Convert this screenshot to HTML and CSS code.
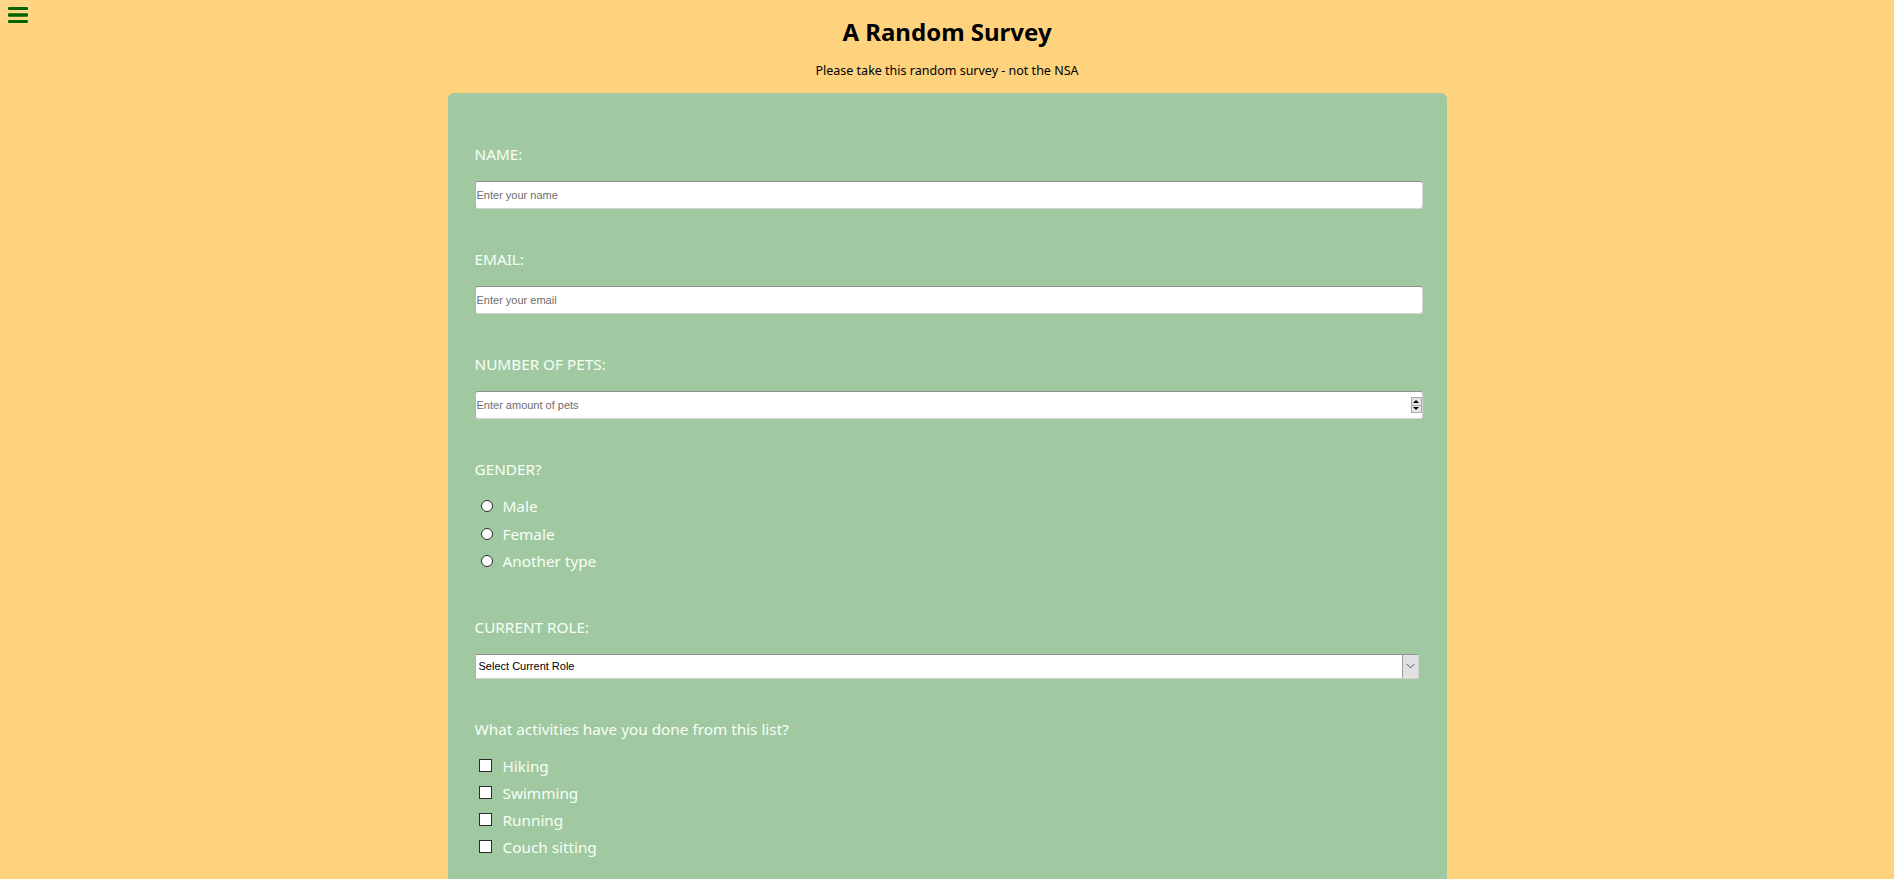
FILE: index.html
```html
<!DOCTYPE html>
<html lang="en">
<head>
<meta charset="utf-8">
<title>A Random Survey</title>
<link rel="stylesheet" href="styles.css">
</head>
<body>
<button class="menu-toggle" type="button" aria-label="Menu">
  <svg width="20" height="17" viewBox="0 0 20 17">
    <rect x="0" y="0" width="20" height="3" rx="1" fill="#006400"/>
    <rect x="0" y="6.3" width="20" height="3.4" rx="1" fill="#006400"/>
    <rect x="0" y="13" width="20" height="3" rx="1" fill="#006400"/>
  </svg>
</button>

<header class="header">
  <h1 class="title">A Random Survey</h1>
  <p class="subtitle">Please take this random survey - not the NSA</p>
</header>

<main class="card">
  <form class="survey">
    <div class="field">
      <label class="field-label" for="name">NAME:</label>
      <input class="text-input" id="name" type="text" placeholder="Enter your name">
    </div>

    <div class="field">
      <label class="field-label" for="email">EMAIL:</label>
      <input class="text-input" id="email" type="email" placeholder="Enter your email">
    </div>

    <div class="field">
      <label class="field-label" for="pets">NUMBER OF PETS:</label>
      <div class="number-wrap">
        <input class="text-input number-input" id="pets" type="number" placeholder="Enter amount of pets">
        <span class="spinner" aria-hidden="true">
          <span class="spin-btn"><span class="tri-up"></span></span>
          <span class="spin-btn"><span class="tri-down"></span></span>
        </span>
      </div>
    </div>

    <div class="field field-choices">
      <p class="field-label">GENDER?</p>
      <div class="choices">
        <label class="choice radio-choice"><input class="radio" type="radio" name="gender" value="male">Male</label>
        <label class="choice radio-choice"><input class="radio" type="radio" name="gender" value="female">Female</label>
        <label class="choice radio-choice"><input class="radio" type="radio" name="gender" value="other">Another type</label>
      </div>
    </div>

    <div class="field">
      <label class="field-label" for="role">CURRENT ROLE:</label>
      <div class="select-wrap">
        <select class="select" id="role">
          <option>Select Current Role</option>
          <option>Student</option>
          <option>Full Time Job</option>
          <option>Other</option>
        </select>
        <span class="select-arrow" aria-hidden="true">
          <svg width="9" height="6" viewBox="0 0 9 6"><path d="M0.5 0.8 L4.5 4.8 L8.5 0.8" fill="none" stroke="#555" stroke-width="1"/></svg>
        </span>
      </div>
    </div>

    <div class="field">
      <p class="field-label">What activities have you done from this list?</p>
      <div class="choices checks">
        <label class="choice check-choice"><input class="checkbox" type="checkbox" value="hiking">Hiking</label>
        <label class="choice check-choice"><input class="checkbox" type="checkbox" value="swimming">Swimming</label>
        <label class="choice check-choice"><input class="checkbox" type="checkbox" value="running">Running</label>
        <label class="choice check-choice"><input class="checkbox" type="checkbox" value="couch">Couch sitting</label>
      </div>
    </div>
  </form>
</main>
</body>
</html>
```

FILE: styles.css
```css
* {
  box-sizing: border-box;
}

html, body {
  margin: 0;
  padding: 0;
}

body {
  background: #ffd37d;
  font-family: "Noto Sans", "Open Sans", sans-serif;
  color: #000;
}

.menu-toggle {
  position: fixed;
  top: 0;
  left: 0;
  width: 33px;
  height: 25px;
  padding: 5px 0 0 8px;
  margin: 0;
  border: none;
  background: rgba(255, 255, 255, 0.07);
  display: block;
  line-height: 0;
  text-align: left;
  cursor: pointer;
}

.header {
  padding-top: 17px;
  text-align: center;
}

.title {
  margin: 0 0 15px;
  font-size: 24px;
  line-height: 30px;
  font-weight: 700;
}

.subtitle {
  margin: 0 0 13px;
  font-size: 12.5px;
  line-height: 18px;
}

.card {
  width: 999px;
  margin: 0 auto;
  background: #a0c9a1;
  border-radius: 6px;
  padding: 51px 24px 60px 27px;
}

.survey {
  display: flex;
  flex-direction: column;
}

.field {
  display: flex;
  flex-direction: column;
  margin-bottom: 40px;
}

.field-choices {
  margin-bottom: 45.5px;
}

.field-label {
  display: block;
  margin: 0 0 17px;
  font-size: 15.3px;
  line-height: 20px;
  color: #f8fff6;
}

.text-input {
  width: 100%;
  height: 28px;
  margin: 0;
  padding: 0 1px;
  border: 1px solid #d4d4d4;
  border-top-color: #8f8f8f;
  border-left-color: #b4b4b4;
  border-radius: 3px;
  background: #fff;
  font-family: "Liberation Sans", Arial, sans-serif;
  font-size: 11px;
  color: #000;
  outline: none;
}

.text-input::placeholder {
  color: #6d6d6d;
}

.number-input {
  -moz-appearance: textfield;
  appearance: textfield;
}

.number-input::-webkit-inner-spin-button,
.number-input::-webkit-outer-spin-button {
  -webkit-appearance: none;
  margin: 0;
}

.number-wrap {
  position: relative;
}

.spinner {
  position: absolute;
  right: 1px;
  top: 6px;
  width: 11px;
  height: 16px;
  display: flex;
  flex-direction: column;
  border: 1px solid #a8a8a8;
  background: #e6e6e6;
}

.spin-btn {
  flex: 1;
  display: flex;
  align-items: center;
  justify-content: center;
}

.spin-btn + .spin-btn {
  border-top: 1px solid #a8a8a8;
}

.tri-up {
  width: 0;
  height: 0;
  border-left: 3px solid transparent;
  border-right: 3px solid transparent;
  border-bottom: 3px solid #000;
}

.tri-down {
  width: 0;
  height: 0;
  border-left: 3px solid transparent;
  border-right: 3px solid transparent;
  border-top: 3px solid #000;
}

.choices {
  display: flex;
  flex-direction: column;
  gap: 7.5px;
}

.checks {
  gap: 7px;
}

.choice {
  display: flex;
  align-items: center;
  font-size: 15.3px;
  line-height: 20px;
  color: #f8fff6;
  cursor: pointer;
}

.radio-choice {
  padding-left: 6px;
}

.check-choice {
  padding-left: 4px;
}

.radio {
  -webkit-appearance: none;
  appearance: none;
  width: 12px;
  height: 12px;
  margin: 0 10px 0 0;
  border: 1px solid #2b2b2b;
  border-radius: 50%;
  background: #fff;
  flex: none;
}

.checkbox {
  -webkit-appearance: none;
  appearance: none;
  width: 13px;
  height: 13px;
  margin: 0 11px 0 0;
  border: 1px solid #2b2b2b;
  border-radius: 0;
  background: #fff;
  flex: none;
}

.select-wrap {
  position: relative;
  width: 944px;
}

.select {
  -webkit-appearance: none;
  appearance: none;
  display: block;
  width: 100%;
  height: 25px;
  margin: 0;
  padding: 0 20px 0 3px;
  border: 1px solid #d0d0d0;
  border-top-color: #8f8f8f;
  border-left-color: #b0b0b0;
  border-radius: 2px;
  background: #fff;
  font-family: "Liberation Sans", Arial, sans-serif;
  font-size: 11px;
  color: #000;
  outline: none;
}

.select-arrow {
  position: absolute;
  top: 1px;
  right: 1px;
  width: 16px;
  height: 23px;
  display: flex;
  align-items: center;
  justify-content: center;
  background: #e1e1e1;
  border-left: 1px solid #9d9d9d;
  pointer-events: none;
}
```
